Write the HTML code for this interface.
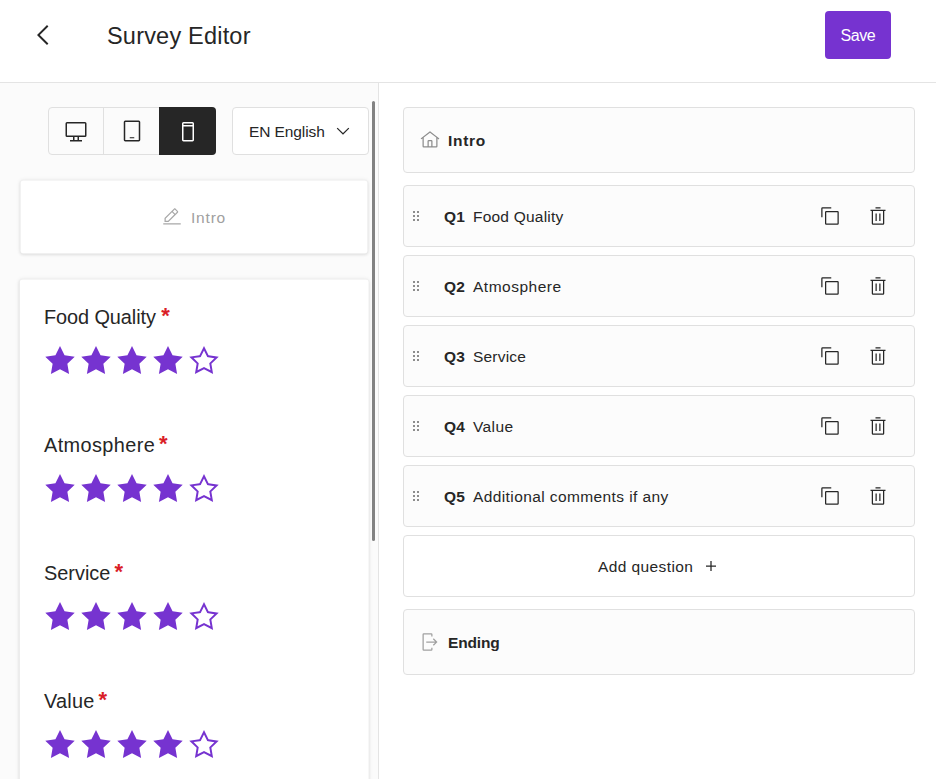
<!DOCTYPE html>
<html lang="en">
<head>
<meta charset="utf-8">
<title>Survey Editor</title>
<style>
*{box-sizing:border-box;margin:0;padding:0}
html,body{width:936px;height:779px;overflow:hidden;background:#fff}
body{font-family:"Liberation Sans",sans-serif;color:#262626;position:relative;font-size:15.5px}
.abs{position:absolute}
svg{display:block;position:absolute}
.t{position:absolute;white-space:nowrap;line-height:20px}
#hdr{left:0;top:0;width:936px;height:83px;background:#fff;border-bottom:1px solid #e4e4e4}
#title{font-size:23.5px;line-height:30px;color:#262626}
#save{left:825px;top:11px;width:66px;height:48px;background:#7633d0;border-radius:4px}
#left{left:0;top:83px;width:379px;height:696px;background:#fbfbfb;border-right:1px solid #e4e4e4;overflow:hidden}
#thumb{left:372px;top:101px;width:3px;height:440px;background:#828282;border-radius:2px}
#tog{left:48px;top:107px;width:168px;height:48px;border:1px solid #e0e0e0;border-radius:4px;background:#fbfbfb}
#tog .d{position:absolute;top:0;width:1px;height:46px;background:#e0e0e0}
#tog .on{position:absolute;left:110px;top:-1px;width:57px;height:48px;background:#262626;border-radius:0 4px 4px 0}
#lang{left:232px;top:107px;width:137px;height:48px;border:1px solid #e0e0e0;border-radius:4px;background:#fff}
.card{background:#fff;border-radius:3px;box-shadow:0 1px 3px rgba(0,0,0,.07),0 0 4px rgba(0,0,0,.08)}
#intro{left:0;top:0;transform:translate(20.5px,180.4px);width:347px;height:72.8px}
#qs{left:0;top:0;transform:translate(19.7px,279.6px);width:348.7px;height:520px}
.ql{font-size:19.9px;line-height:24px;color:#262626}
.ql b{font-weight:700;color:#da1e28;font-size:22px;position:absolute;top:-1px;letter-spacing:0}
.row{left:403px;width:512px;border:1px solid #e0e0e0;border-radius:4px;background:#fcfcfc}
.row.w{background:#fff}
.bt{font-weight:700}
</style>
</head>
<body>
<div id="hdr" class="abs"></div>
<svg style="left:27px;top:19px" width="32" height="32" viewBox="0 0 32 32" fill="#262626"><path d="M10 16L20 6 21.4 7.4 12.8 16 21.4 24.6 20 26z"/></svg>
<div id="title" class="t" style="left:107px;top:21px;letter-spacing:0.2px">Survey Editor</div>
<div id="save" class="abs"></div>
<div class="t" style="left:840.5px;top:26px;letter-spacing:-0.45px;color:#fff;font-size:16px">Save</div>
<div id="left" class="abs"></div>
<div id="tog" class="abs"><div class="d" style="left:54px"></div><div class="on"></div></div>
<svg style="left:64px;top:119px" width="24" height="24" viewBox="0 0 32 32" fill="#262626"><path d="M28,4H4A2,2,0,0,0,2,6V22a2,2,0,0,0,2,2h8v4H8v2H24V28H20V24h8a2,2,0,0,0,2-2V6A2,2,0,0,0,28,4ZM18,28H14V24h4Zm10-6H4V6H28Z"/></svg>
<svg style="left:120px;top:119px" width="24" height="24" viewBox="0 0 32 32" fill="#262626"><rect x="13" y="24.3" width="6" height="1.4"/><path d="M25,30H7a2.0023,2.0023,0,0,1-2-2V4A2.002,2.002,0,0,1,7,2H25a2.0023,2.0023,0,0,1,2,2V28A2.0027,2.0027,0,0,1,25,30ZM7,4V28H25V4Z"/></svg>
<svg style="left:176px;top:119px" width="24" height="24" viewBox="0 0 32 32" fill="#fff"><path d="M22,4H10A2.002,2.002,0,0,0,8,6V28a2.0023,2.0023,0,0,0,2,2H22a2.0027,2.0027,0,0,0,2-2V6A2.0023,2.0023,0,0,0,22,4Zm0,2,0,2H10V6ZM10,28V10H22l0,18Z"/></svg>
<div id="lang" class="abs"></div>
<div class="t" style="left:249px;top:122px;letter-spacing:-0.1px">EN English</div>
<svg style="left:333px;top:121px" width="20" height="20" viewBox="0 0 32 32" fill="#262626"><path d="M16 22L6 12 7.4 10.6 16 19.2 24.6 10.6 26 12z"/></svg>
<div id="intro" class="abs card"></div>
<svg style="left:162px;top:207px" width="20" height="20" viewBox="0 0 32 32" fill="#a8a8a8"><rect x="2" y="26" width="28" height="2"/><path d="M25.4,9c0.8-0.8,0.8-2,0-2.8c0,0,0,0,0,0l-3.6-3.6c-0.8-0.8-2-0.8-2.8,0c0,0,0,0,0,0l-15,15V24h6.4L25.4,9z M20.4,4L24,7.6l-3,3L17.4,7L20.4,4z M6,22v-3.6l10-10l3.6,3.6l-10,10H6z"/></svg>
<div class="t" style="left:191px;top:208px;letter-spacing:0.8px;color:#a0a0a0">Intro</div>
<div id="qs" class="abs card"></div>
<div class="t ql" style="left:44px;top:305px;letter-spacing:-0.08px">Food Quality<b style="left:117.30000000000001px">*</b></div>
<svg style="left:44px;top:344px" width="32" height="32" viewBox="0 0 32 32" fill="#7633d0"><path d="M16,2l-4.55,9.22L1.28,12.69l7.36,7.18L6.9,30,16,25.22,25.1,30,23.36,19.87l7.36-7.17L20.55,11.22Z"/></svg>
<svg style="left:80px;top:344px" width="32" height="32" viewBox="0 0 32 32" fill="#7633d0"><path d="M16,2l-4.55,9.22L1.28,12.69l7.36,7.18L6.9,30,16,25.22,25.1,30,23.36,19.87l7.36-7.17L20.55,11.22Z"/></svg>
<svg style="left:116px;top:344px" width="32" height="32" viewBox="0 0 32 32" fill="#7633d0"><path d="M16,2l-4.55,9.22L1.28,12.69l7.36,7.18L6.9,30,16,25.22,25.1,30,23.36,19.87l7.36-7.17L20.55,11.22Z"/></svg>
<svg style="left:152px;top:344px" width="32" height="32" viewBox="0 0 32 32" fill="#7633d0"><path d="M16,2l-4.55,9.22L1.28,12.69l7.36,7.18L6.9,30,16,25.22,25.1,30,23.36,19.87l7.36-7.17L20.55,11.22Z"/></svg>
<svg style="left:188px;top:344px" width="32" height="32" viewBox="0 0 32 32" fill="#7633d0"><path d="M16,6.52l2.76,5.58.46,1,1,.15,6.16.89L22,18.44l-.75.73.18,1,1.05,6.13-5.51-2.89L16,23l-.93.49L9.56,26.34l1-6.13.18-1L10,18.44,5.58,14.09l6.16-.89,1-.15.46-1L16,6.52M16,2l-4.55,9.22L1.28,12.69l7.36,7.18L6.9,30,16,25.22,25.1,30,23.36,19.87l7.36-7.17L20.55,11.22Z"/></svg>
<div class="t ql" style="left:44px;top:433px;letter-spacing:0.4px">Atmosphere<b style="left:115px">*</b></div>
<svg style="left:44px;top:472px" width="32" height="32" viewBox="0 0 32 32" fill="#7633d0"><path d="M16,2l-4.55,9.22L1.28,12.69l7.36,7.18L6.9,30,16,25.22,25.1,30,23.36,19.87l7.36-7.17L20.55,11.22Z"/></svg>
<svg style="left:80px;top:472px" width="32" height="32" viewBox="0 0 32 32" fill="#7633d0"><path d="M16,2l-4.55,9.22L1.28,12.69l7.36,7.18L6.9,30,16,25.22,25.1,30,23.36,19.87l7.36-7.17L20.55,11.22Z"/></svg>
<svg style="left:116px;top:472px" width="32" height="32" viewBox="0 0 32 32" fill="#7633d0"><path d="M16,2l-4.55,9.22L1.28,12.69l7.36,7.18L6.9,30,16,25.22,25.1,30,23.36,19.87l7.36-7.17L20.55,11.22Z"/></svg>
<svg style="left:152px;top:472px" width="32" height="32" viewBox="0 0 32 32" fill="#7633d0"><path d="M16,2l-4.55,9.22L1.28,12.69l7.36,7.18L6.9,30,16,25.22,25.1,30,23.36,19.87l7.36-7.17L20.55,11.22Z"/></svg>
<svg style="left:188px;top:472px" width="32" height="32" viewBox="0 0 32 32" fill="#7633d0"><path d="M16,6.52l2.76,5.58.46,1,1,.15,6.16.89L22,18.44l-.75.73.18,1,1.05,6.13-5.51-2.89L16,23l-.93.49L9.56,26.34l1-6.13.18-1L10,18.44,5.58,14.09l6.16-.89,1-.15.46-1L16,6.52M16,2l-4.55,9.22L1.28,12.69l7.36,7.18L6.9,30,16,25.22,25.1,30,23.36,19.87l7.36-7.17L20.55,11.22Z"/></svg>
<div class="t ql" style="left:44px;top:561px">Service<b style="left:70.5px">*</b></div>
<svg style="left:44px;top:600px" width="32" height="32" viewBox="0 0 32 32" fill="#7633d0"><path d="M16,2l-4.55,9.22L1.28,12.69l7.36,7.18L6.9,30,16,25.22,25.1,30,23.36,19.87l7.36-7.17L20.55,11.22Z"/></svg>
<svg style="left:80px;top:600px" width="32" height="32" viewBox="0 0 32 32" fill="#7633d0"><path d="M16,2l-4.55,9.22L1.28,12.69l7.36,7.18L6.9,30,16,25.22,25.1,30,23.36,19.87l7.36-7.17L20.55,11.22Z"/></svg>
<svg style="left:116px;top:600px" width="32" height="32" viewBox="0 0 32 32" fill="#7633d0"><path d="M16,2l-4.55,9.22L1.28,12.69l7.36,7.18L6.9,30,16,25.22,25.1,30,23.36,19.87l7.36-7.17L20.55,11.22Z"/></svg>
<svg style="left:152px;top:600px" width="32" height="32" viewBox="0 0 32 32" fill="#7633d0"><path d="M16,2l-4.55,9.22L1.28,12.69l7.36,7.18L6.9,30,16,25.22,25.1,30,23.36,19.87l7.36-7.17L20.55,11.22Z"/></svg>
<svg style="left:188px;top:600px" width="32" height="32" viewBox="0 0 32 32" fill="#7633d0"><path d="M16,6.52l2.76,5.58.46,1,1,.15,6.16.89L22,18.44l-.75.73.18,1,1.05,6.13-5.51-2.89L16,23l-.93.49L9.56,26.34l1-6.13.18-1L10,18.44,5.58,14.09l6.16-.89,1-.15.46-1L16,6.52M16,2l-4.55,9.22L1.28,12.69l7.36,7.18L6.9,30,16,25.22,25.1,30,23.36,19.87l7.36-7.17L20.55,11.22Z"/></svg>
<div class="t ql" style="left:44px;top:689px;letter-spacing:0.25px">Value<b style="left:54.5px">*</b></div>
<svg style="left:44px;top:728px" width="32" height="32" viewBox="0 0 32 32" fill="#7633d0"><path d="M16,2l-4.55,9.22L1.28,12.69l7.36,7.18L6.9,30,16,25.22,25.1,30,23.36,19.87l7.36-7.17L20.55,11.22Z"/></svg>
<svg style="left:80px;top:728px" width="32" height="32" viewBox="0 0 32 32" fill="#7633d0"><path d="M16,2l-4.55,9.22L1.28,12.69l7.36,7.18L6.9,30,16,25.22,25.1,30,23.36,19.87l7.36-7.17L20.55,11.22Z"/></svg>
<svg style="left:116px;top:728px" width="32" height="32" viewBox="0 0 32 32" fill="#7633d0"><path d="M16,2l-4.55,9.22L1.28,12.69l7.36,7.18L6.9,30,16,25.22,25.1,30,23.36,19.87l7.36-7.17L20.55,11.22Z"/></svg>
<svg style="left:152px;top:728px" width="32" height="32" viewBox="0 0 32 32" fill="#7633d0"><path d="M16,2l-4.55,9.22L1.28,12.69l7.36,7.18L6.9,30,16,25.22,25.1,30,23.36,19.87l7.36-7.17L20.55,11.22Z"/></svg>
<svg style="left:188px;top:728px" width="32" height="32" viewBox="0 0 32 32" fill="#7633d0"><path d="M16,6.52l2.76,5.58.46,1,1,.15,6.16.89L22,18.44l-.75.73.18,1,1.05,6.13-5.51-2.89L16,23l-.93.49L9.56,26.34l1-6.13.18-1L10,18.44,5.58,14.09l6.16-.89,1-.15.46-1L16,6.52M16,2l-4.55,9.22L1.28,12.69l7.36,7.18L6.9,30,16,25.22,25.1,30,23.36,19.87l7.36-7.17L20.55,11.22Z"/></svg>
<div id="thumb" class="abs"></div>
<div class="abs row" style="top:107px;height:66px"></div>
<div class="abs row" style="top:185px;height:62px"></div>
<div class="abs row" style="top:255px;height:62px"></div>
<div class="abs row" style="top:325px;height:62px"></div>
<div class="abs row" style="top:395px;height:62px"></div>
<div class="abs row" style="top:465px;height:62px"></div>
<div class="abs row w" style="top:535px;height:62px"></div>
<div class="abs row" style="top:609px;height:66px"></div>
<svg style="left:420px;top:130px" width="20" height="20" viewBox="0 0 32 32" fill="#8d8d8d"><path d="M16.6123,2.2138a1.01,1.01,0,0,0-1.2427,0L1,13.4194l1.2427,1.5717L4,13.6209V26a2.0041,2.0041,0,0,0,2,2H26a2.0037,2.0037,0,0,0,2-2V13.63L29.7573,15,31,13.4282ZM18,26H14V18h4Zm2,0V18a2.0023,2.0023,0,0,0-2-2H14a2.002,2.002,0,0,0-2,2v8H6V12.0615l10-7.79,10,7.8005V26Z"/></svg>
<div class="t bt" style="left:448px;top:131px;letter-spacing:0.7px">Intro</div>
<svg style="left:408px;top:208px" width="16" height="16" viewBox="0 0 32 32" fill="#8d8d8d"><rect x="10" y="6" width="4" height="4"/><rect x="18" y="6" width="4" height="4"/><rect x="10" y="14" width="4" height="4"/><rect x="18" y="14" width="4" height="4"/><rect x="10" y="22" width="4" height="4"/><rect x="18" y="22" width="4" height="4"/></svg>
<div class="t bt" style="left:444px;top:207px;letter-spacing:0.3px">Q1</div>
<div class="t" style="left:473px;top:207px;letter-spacing:0.22px">Food Quality</div>
<svg style="left:820px;top:206px" width="20" height="20" viewBox="0 0 32 32" fill="#262626"><path d="M28,10V28H10V10H28m0-2H10a2,2,0,0,0-2,2V28a2,2,0,0,0,2,2H28a2,2,0,0,0,2-2V10a2,2,0,0,0-2-2Z"/><path d="M4,18H2V4A2,2,0,0,1,4,2H18V4H4Z"/></svg>
<svg style="left:868px;top:206px" width="20" height="20" viewBox="0 0 32 32" fill="#262626"><rect x="12" y="12" width="2" height="12"/><rect x="18" y="12" width="2" height="12"/><path d="M4,6V8H6V28a2,2,0,0,0,2,2H24a2,2,0,0,0,2-2V8h2V6ZM8,28V8H24V28Z"/><rect x="12" y="2" width="8" height="2"/></svg>
<svg style="left:408px;top:278px" width="16" height="16" viewBox="0 0 32 32" fill="#8d8d8d"><rect x="10" y="6" width="4" height="4"/><rect x="18" y="6" width="4" height="4"/><rect x="10" y="14" width="4" height="4"/><rect x="18" y="14" width="4" height="4"/><rect x="10" y="22" width="4" height="4"/><rect x="18" y="22" width="4" height="4"/></svg>
<div class="t bt" style="left:444px;top:277px;letter-spacing:0.3px">Q2</div>
<div class="t" style="left:473px;top:277px;letter-spacing:0.5px">Atmosphere</div>
<svg style="left:820px;top:276px" width="20" height="20" viewBox="0 0 32 32" fill="#262626"><path d="M28,10V28H10V10H28m0-2H10a2,2,0,0,0-2,2V28a2,2,0,0,0,2,2H28a2,2,0,0,0,2-2V10a2,2,0,0,0-2-2Z"/><path d="M4,18H2V4A2,2,0,0,1,4,2H18V4H4Z"/></svg>
<svg style="left:868px;top:276px" width="20" height="20" viewBox="0 0 32 32" fill="#262626"><rect x="12" y="12" width="2" height="12"/><rect x="18" y="12" width="2" height="12"/><path d="M4,6V8H6V28a2,2,0,0,0,2,2H24a2,2,0,0,0,2-2V8h2V6ZM8,28V8H24V28Z"/><rect x="12" y="2" width="8" height="2"/></svg>
<svg style="left:408px;top:348px" width="16" height="16" viewBox="0 0 32 32" fill="#8d8d8d"><rect x="10" y="6" width="4" height="4"/><rect x="18" y="6" width="4" height="4"/><rect x="10" y="14" width="4" height="4"/><rect x="18" y="14" width="4" height="4"/><rect x="10" y="22" width="4" height="4"/><rect x="18" y="22" width="4" height="4"/></svg>
<div class="t bt" style="left:444px;top:347px;letter-spacing:0.3px">Q3</div>
<div class="t" style="left:473px;top:347px;letter-spacing:0.2px">Service</div>
<svg style="left:820px;top:346px" width="20" height="20" viewBox="0 0 32 32" fill="#262626"><path d="M28,10V28H10V10H28m0-2H10a2,2,0,0,0-2,2V28a2,2,0,0,0,2,2H28a2,2,0,0,0,2-2V10a2,2,0,0,0-2-2Z"/><path d="M4,18H2V4A2,2,0,0,1,4,2H18V4H4Z"/></svg>
<svg style="left:868px;top:346px" width="20" height="20" viewBox="0 0 32 32" fill="#262626"><rect x="12" y="12" width="2" height="12"/><rect x="18" y="12" width="2" height="12"/><path d="M4,6V8H6V28a2,2,0,0,0,2,2H24a2,2,0,0,0,2-2V8h2V6ZM8,28V8H24V28Z"/><rect x="12" y="2" width="8" height="2"/></svg>
<svg style="left:408px;top:418px" width="16" height="16" viewBox="0 0 32 32" fill="#8d8d8d"><rect x="10" y="6" width="4" height="4"/><rect x="18" y="6" width="4" height="4"/><rect x="10" y="14" width="4" height="4"/><rect x="18" y="14" width="4" height="4"/><rect x="10" y="22" width="4" height="4"/><rect x="18" y="22" width="4" height="4"/></svg>
<div class="t bt" style="left:444px;top:417px;letter-spacing:0.3px">Q4</div>
<div class="t" style="left:473px;top:417px;letter-spacing:0.4px">Value</div>
<svg style="left:820px;top:416px" width="20" height="20" viewBox="0 0 32 32" fill="#262626"><path d="M28,10V28H10V10H28m0-2H10a2,2,0,0,0-2,2V28a2,2,0,0,0,2,2H28a2,2,0,0,0,2-2V10a2,2,0,0,0-2-2Z"/><path d="M4,18H2V4A2,2,0,0,1,4,2H18V4H4Z"/></svg>
<svg style="left:868px;top:416px" width="20" height="20" viewBox="0 0 32 32" fill="#262626"><rect x="12" y="12" width="2" height="12"/><rect x="18" y="12" width="2" height="12"/><path d="M4,6V8H6V28a2,2,0,0,0,2,2H24a2,2,0,0,0,2-2V8h2V6ZM8,28V8H24V28Z"/><rect x="12" y="2" width="8" height="2"/></svg>
<svg style="left:408px;top:488px" width="16" height="16" viewBox="0 0 32 32" fill="#8d8d8d"><rect x="10" y="6" width="4" height="4"/><rect x="18" y="6" width="4" height="4"/><rect x="10" y="14" width="4" height="4"/><rect x="18" y="14" width="4" height="4"/><rect x="10" y="22" width="4" height="4"/><rect x="18" y="22" width="4" height="4"/></svg>
<div class="t bt" style="left:444px;top:487px;letter-spacing:0.3px">Q5</div>
<div class="t" style="left:473px;top:487px;letter-spacing:0.4px">Additional comments if any</div>
<svg style="left:820px;top:486px" width="20" height="20" viewBox="0 0 32 32" fill="#262626"><path d="M28,10V28H10V10H28m0-2H10a2,2,0,0,0-2,2V28a2,2,0,0,0,2,2H28a2,2,0,0,0,2-2V10a2,2,0,0,0-2-2Z"/><path d="M4,18H2V4A2,2,0,0,1,4,2H18V4H4Z"/></svg>
<svg style="left:868px;top:486px" width="20" height="20" viewBox="0 0 32 32" fill="#262626"><rect x="12" y="12" width="2" height="12"/><rect x="18" y="12" width="2" height="12"/><path d="M4,6V8H6V28a2,2,0,0,0,2,2H24a2,2,0,0,0,2-2V8h2V6ZM8,28V8H24V28Z"/><rect x="12" y="2" width="8" height="2"/></svg>
<div class="t" style="left:598px;top:557px;letter-spacing:0.4px">Add question</div>
<svg style="left:701px;top:556px" width="20" height="20" viewBox="0 0 32 32" fill="#262626"><path d="M17 15L17 8 15 8 15 15 8 15 8 17 15 17 15 24 17 24 17 17 24 17 24 15z"/></svg>
<svg style="left:420px;top:632px" width="20" height="20" viewBox="0 0 32 32" fill="#a0a0a0"><path d="M6,30H18a2.0023,2.0023,0,0,0,2-2V25H18v3H6V4H18V7h2V4a2.0023,2.0023,0,0,0-2-2H6A2.0023,2.0023,0,0,0,4,4V28A2.0023,2.0023,0,0,0,6,30Z"/><path d="M20.586 20.586L24.172 17 10 17 10 15 24.172 15 20.586 11.414 22 10 28 16 22 22 20.586 20.586z"/></svg>
<div class="t bt" style="left:448px;top:633px;letter-spacing:-0.15px">Ending</div>
</body>
</html>
